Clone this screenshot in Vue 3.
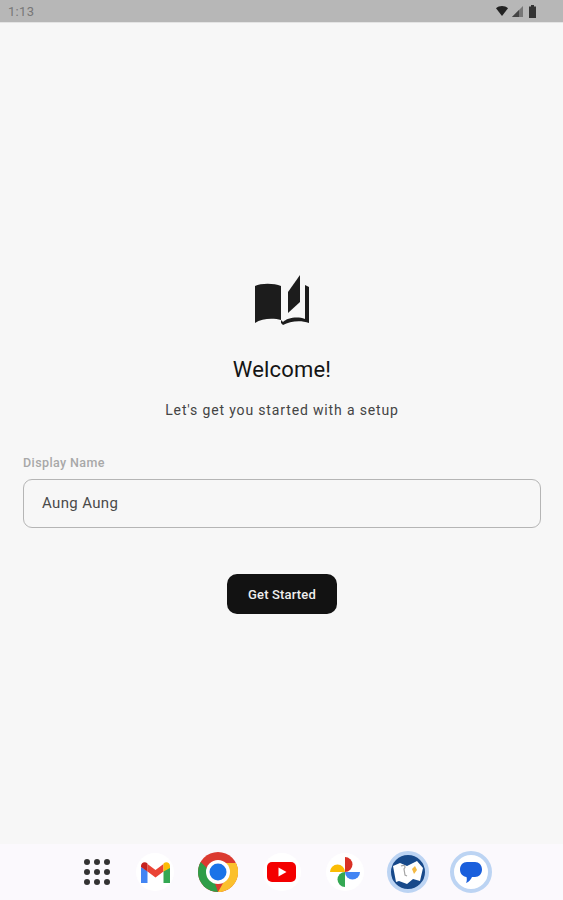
<script setup>
const dots = Array.from({ length: 9 })
</script>

<template>
  <div class="screen">
    <header class="status">
      <span class="time">1:13</span>
      <div class="status-icons">
        <svg width="12" height="10" viewBox="0 0 12 10"><path d="M0 2.200C3.200-.7 8.800-.7 12 2.200L6 10z" fill="#222"/></svg>
        <svg width="11" height="11" viewBox="0 0 11 11"><path d="M11 0V11H0z" fill="#777"/><path d="M7 4V11H0z" fill="#444"/></svg>
        <svg class="battery" width="7" height="13" viewBox="0 0 7 13"><path d="M2 0H5V1.500H7V13H0V1.500H2z" fill="#333"/></svg>
      </div>
    </header>

    <main class="main">
      <svg class="book" width="56" height="52" viewBox="0 0 56 52">
        <path d="M1 11C7 8 20 8 27 11V45C20 43 8 43 1 48z" fill="#1c1c1c"/>
        <path d="M27 45 29 47C33 43 43 41 51 44V10L55 12V48C47 45 36 46 29 50L27 48z" fill="#1c1c1c"/>
        <path d="M34 17 46 0V27L34 38z" fill="#1c1c1c"/>
      </svg>
      <h1 class="title">Welcome!</h1>
      <p class="subtitle">Let's get you started with a setup</p>

      <div class="field">
        <label class="label">Display Name</label>
        <div class="input">Aung Aung</div>
      </div>

      <button class="cta">Get Started</button>
    </main>

    <footer class="dock">
      <div class="app grid"><i v-for="(d, i) in dots" :key="i"></i></div>
      <div class="app">
        <div class="disc">
          <svg width="29" height="21" viewBox="0 0 29 21">
            <path d="M0 5V21H6.500V9z" fill="#4285f4"/>
            <path d="M22.500 9V21H29V5z" fill="#34a853"/>
            <path d="M6.500 2 14.500 8 22.500 2V9.500L14.500 15.500 6.500 9.500z" fill="#ea4335"/>
            <path d="M0 5V4C0 .5 4 -1 6.500 1.500V9.500z" fill="#c5221f"/>
            <path d="M22.500 9.500V1.500C25 -1 29 .5 29 4V6z" fill="#fbbc04"/>
          </svg>
        </div>
      </div>
      <div class="app">
        <svg width="40" height="40" viewBox="0 0 40 40">
          <circle cx="20" cy="20" r="20" fill="#db3a30"/>
          <path d="M20 40A20 20 0 0 1 2.700 10L13 20 20 40z" fill="#2f9e48"/>
          <path d="M20 40 28 26 20 11H38A20 20 0 0 1 20 40z" fill="#fbc02d"/>
          <circle cx="20" cy="20" r="12" fill="#fff"/>
          <circle cx="20" cy="20" r="8.500" fill="#1a73e8"/>
        </svg>
      </div>
      <div class="app">
        <div class="disc">
          <svg width="29" height="20" viewBox="0 0 29 20">
            <rect width="29" height="20" rx="5" fill="#f40000"/>
            <path d="M11.500 5.500 19.500 10 11.500 14.500z" fill="#fff"/>
          </svg>
        </div>
      </div>
      <div class="app">
        <div class="disc">
          <svg width="30" height="30" viewBox="0 0 30 30">
            <path d="M0 15A7.500 7.500 0 0 1 15 15z" fill="#fbbc04"/>
            <path d="M15 0A7.500 7.500 0 0 1 15 15z" fill="#d93025"/>
            <path d="M30 15A7.500 7.500 0 0 1 15 15z" fill="#4285f4"/>
            <path d="M15 30A7.500 7.500 0 0 1 15 15z" fill="#34a853"/>
          </svg>
        </div>
      </div>
      <div class="app">
        <div class="ring deck">
          <svg width="30" height="25" viewBox="0 0 30 25">
            <path d="M0 6 7 3 14 6 24 1 30 8 27 21 20 19 14 24 6 21 3 22z" fill="#fff"/>
            <path d="M19 9 22 6 24 10 21 14z" fill="#f4b942"/>
            <path d="M8 6C12 4 13 7 11 9L12 15 14 16" fill="none" stroke="#a5a5a5" stroke-width="1.200"/>
          </svg>
        </div>
      </div>
      <div class="app">
        <div class="ring msg">
          <svg width="22" height="21" viewBox="0 0 22 21">
            <path d="M7 0H15C19 0 22 3 22 7.500S19 15 15 15H12C11 17.500 9 20 6 21 7 19 7 17 6.500 15 3 14.500 0 12 0 7.500S3 0 7 0z" fill="#1a5fdc"/>
          </svg>
        </div>
      </div>
    </footer>
  </div>
</template>

<style scoped>
.screen {
  width: 563px;
  height: 900px;
  display: flex;
  flex-direction: column;
  background: #f7f7f7;
  font-family: Roboto, "Liberation Sans", sans-serif;
  overflow: hidden;
}
.status {
  height: 23px;
  flex: none;
  background: #b7b7b7;
  border-bottom: 1px solid #e4e4e4;
  box-sizing: border-box;
  display: flex;
  align-items: center;
  justify-content: space-between;
  padding: 0 27px 0 8px;
}
.time { font-size: 13px; color: #777; letter-spacing: 0.3px; }
.status-icons { display: flex; align-items: center; gap: 4px; }
.battery { margin-left: 2px; }
.main {
  flex: 1;
  display: flex;
  flex-direction: column;
  align-items: center;
  padding: 252px 22px 0 23px;
  box-sizing: border-box;
}
.book { display: block; flex: none; }
.title {
  margin: 30px 0 0;
  font-size: 22px;
  line-height: 26px;
  font-weight: 400;
  color: #141414;
  letter-spacing: 0.2px;
}
.subtitle {
  margin: 18px 0 0;
  font-size: 14px;
  line-height: 18px;
  color: #444;
  letter-spacing: 0.85px;
}
.field { width: 100%; margin-top: 36px; }
.label {
  display: block;
  font-size: 12.500px;
  line-height: 16px;
  font-weight: 500;
  color: #a8a8a8;
  letter-spacing: 0.4px;
}
.input {
  margin-top: 8px;
  height: 49px;
  box-sizing: border-box;
  border: 1px solid #b5b5b5;
  border-radius: 9px;
  padding: 0 18px 2px;
  display: flex;
  align-items: center;
  font-size: 15px;
  color: #4a4a4a;
  letter-spacing: 0.35px;
}
.cta {
  margin-top: 46px;
  width: 110px;
  height: 40px;
  border: 0;
  border-radius: 10px;
  background: #121212;
  color: #eee;
  font: 500 13px Roboto, "Liberation Sans", sans-serif;
  letter-spacing: 0.15px;
}
.dock {
  height: 56px;
  flex: none;
  background: #fbf9fd;
  display: flex;
  align-items: center;
  gap: 13.200px;
  padding-left: 72px;
}
.app {
  width: 50px;
  height: 44px;
  flex: none;
  display: flex;
  align-items: center;
  justify-content: center;
}
.disc {
  width: 38px;
  height: 38px;
  background: #fff;
  border-radius: 50%;
  display: flex;
  align-items: center;
  justify-content: center;
}
.grid {
  display: grid;
  grid-template-columns: repeat(3, 6px);
  gap: 4px;
  justify-content: center;
  align-content: center;
  margin-right: -5px;
}
.grid i { width: 6px; height: 6px; border-radius: 50%; background: #333; }
.ring {
  width: 34px;
  height: 34px;
  border: 4px solid #bcd4f3;
  border-radius: 50%;
  display: flex;
  align-items: center;
  justify-content: center;
}
.deck { background: #17498a; }
.msg { background: #fff; }
</style>
